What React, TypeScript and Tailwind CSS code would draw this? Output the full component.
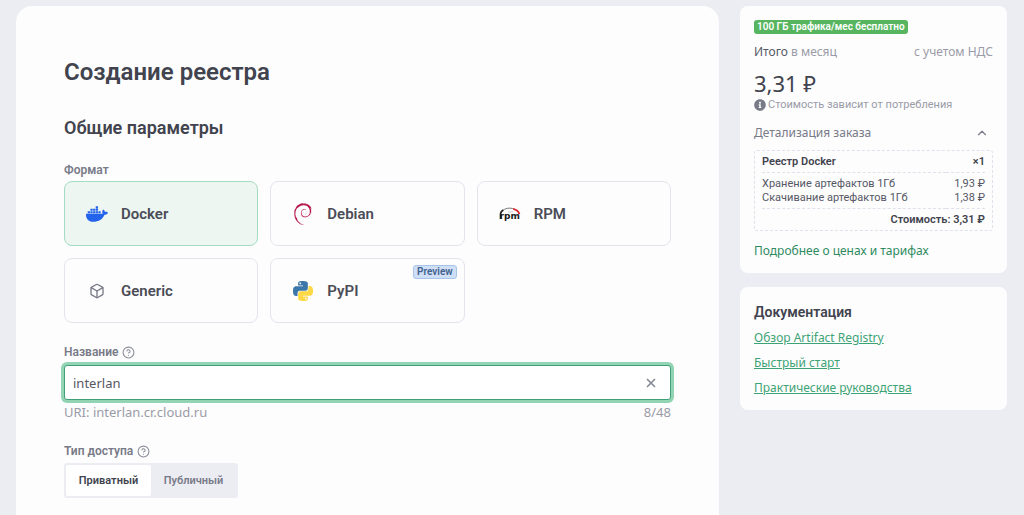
import { useState } from 'react'
import type { ReactNode } from 'react'
import { Box, ChevronUp, CircleHelp, X } from 'lucide-react'
import { FaDocker, FaInfoCircle } from 'react-icons/fa'
import { SiDebian } from 'react-icons/si'

function PythonIcon() {
  return (
    <svg viewBox="0 0 24 24" className="h-5 w-5" aria-hidden="true">
      <path
        fill="#3b77a8"
        d="M14.25.18l.9.2.73.26.59.3.45.32.34.34.25.34.16.33.1.3.04.26.02.2-.01.13V8.5l-.05.63-.13.55-.21.46-.26.38-.3.31-.33.25-.35.19-.35.14-.33.1-.3.07-.26.04-.21.02H8.77l-.69.05-.59.14-.5.22-.41.27-.33.32-.27.35-.2.36-.15.37-.1.35-.07.32-.04.27-.02.21v3.06H3.17l-.21-.03-.28-.07-.32-.12-.35-.18-.36-.26-.36-.36-.35-.46-.32-.59-.28-.73-.21-.88-.14-1.05-.05-1.23.06-1.22.16-1.04.24-.87.32-.71.36-.57.4-.44.42-.33.42-.24.4-.16.36-.1.32-.05.24-.01h.16l.06.01h8.16v-.83H6.18l-.01-2.75-.02-.37.05-.34.11-.31.17-.28.25-.26.31-.23.38-.2.44-.18.51-.15.58-.12.64-.1.71-.06.77-.04.84-.02 1.27.05zm-6.3 1.98l-.23.33-.08.41.08.41.23.34.33.22.41.09.41-.09.33-.22.23-.34.08-.41-.08-.41-.23-.33-.33-.22-.41-.09-.41.09z"
      />
      <path
        fill="#ffd845"
        d="M21.04 6.11l.28.06.32.12.35.18.36.27.36.35.35.47.32.59.28.73.21.88.14 1.04.05 1.23-.06 1.23-.16 1.04-.24.86-.32.71-.36.57-.4.45-.42.33-.42.24-.4.16-.36.09-.32.05-.24.02-.16-.01h-8.22v.82h5.84l.01 2.76.02.36-.05.34-.11.31-.17.29-.25.25-.31.24-.38.2-.44.17-.51.15-.58.13-.64.09-.71.07-.77.04-.84.01-1.27-.04-1.07-.14-.9-.2-.73-.25-.59-.3-.45-.33-.34-.34-.25-.34-.16-.33-.1-.3-.04-.25-.02-.2.01-.13v-5.34l.05-.64.13-.54.21-.46.26-.38.3-.32.33-.24.35-.2.35-.14.33-.1.3-.06.26-.04.21-.02.13-.01h5.84l.69-.05.59-.14.5-.21.41-.28.33-.32.27-.35.2-.36.15-.36.1-.35.07-.32.04-.28.02-.21V6.07h2.09l.14.01zm-6.47 14.25l-.23.33-.08.41.08.41.23.33.33.23.41.08.41-.08.33-.23.23-.33.08-.41-.08-.41-.23-.33-.33-.23-.41-.08-.41.08z"
      />
    </svg>
  )
}

function RpmIcon() {
  return (
    <svg viewBox="0 0 22 14" className="h-[14px] w-[22px]" aria-hidden="true">
      <path d="M3 4.2C6 1 11 .4 15 2" fill="none" stroke="#777" strokeWidth="1" />
      <path d="M1.6 12V6.500C1.800 5 2.800 3.800 4.300 3" fill="none" stroke="#222" strokeWidth="1.8" />
      <path d="M14.2 1.900C17.600 2.700 19.800 4.500 20.400 7.200" fill="none" stroke="#d9252c" strokeWidth="1.8" />
      <path d="M9 5.200L14 4.600" stroke="#aaa" strokeWidth="0.6" />
      <text x="0.6" y="12" fontSize="9" fontWeight="700" fontFamily="DejaVu Sans" fill="#1a1a1a">
        rpm
      </text>
    </svg>
  )
}

interface Format {
  id: string
  icon: ReactNode
  preview?: boolean
}

const formats: Format[] = [
  { id: 'Docker', icon: <FaDocker className="h-[22px] w-[22px] text-[#2463eb]" /> },
  { id: 'Debian', icon: <SiDebian className="h-[22px] w-[22px] text-[#b8194c]" /> },
  { id: 'RPM', icon: <RpmIcon /> },
  { id: 'Generic', icon: <Box className="h-4 w-4 text-[#787a88]" strokeWidth={2} /> },
  { id: 'PyPI', icon: <PythonIcon />, preview: true },
]

const artifacts = [
  { name: 'Хранение артефактов 1Гб', price: '1,93 ₽' },
  { name: 'Скачивание артефактов 1Гб', price: '1,38 ₽' },
]

const docs = ['Обзор Artifact Registry', 'Быстрый старт', 'Практические руководства']

const accessTypes = ['Приватный', 'Публичный']

function Hint({ label }: { label: string }) {
  return (
    <button type="button" aria-label={label} className="text-[#8b8d9a]">
      <CircleHelp className="h-[13px] w-[13px]" />
    </button>
  )
}

function RegistryForm() {
  const [format, setFormat] = useState('Docker')
  const [name, setName] = useState('interlan')
  const [access, setAccess] = useState('Приватный')

  return (
    <main className="min-w-0 flex-1 rounded-t-2xl bg-[#fdfdfd] px-12 pt-[50px]">
      <h1 className="font-[Roboto,sans-serif] text-2xl leading-8 font-semibold text-[#41434e]">Создание реестра</h1>
      <h2 className="mt-7 font-[Roboto,sans-serif] text-lg leading-6 font-semibold text-[#41434e]">
        Общие параметры
      </h2>

      <fieldset className="mt-[21px]">
        <legend className="font-[Roboto,sans-serif] text-[12px] leading-[18px] font-semibold text-[#787a88]">
          Формат
        </legend>
        <div className="mt-[2px] grid grid-cols-3 gap-3">
          {formats.map((f) => (
            <label
              key={f.id}
              className={`relative flex h-[65px] cursor-pointer items-center rounded-lg border pl-5 ${
                format === f.id ? 'border-[#a3dcc3] bg-[#edf6f1]' : 'border-[#e3e4ed]'
              }`}
            >
              <input
                type="radio"
                name="format"
                value={f.id}
                checked={format === f.id}
                onChange={() => setFormat(f.id)}
                className="sr-only"
              />
              <span className="flex w-6 justify-center">{f.icon}</span>
              <span className="ml-3 font-[Roboto,sans-serif] text-[15px] leading-5 font-semibold text-[#4b4c57]">
                {f.id}
              </span>
              {f.preview && (
                <span className="absolute top-[6px] right-[7px] rounded-[3px] border border-[#a9c4ea] bg-[#cfdff5] px-[3px] font-[Roboto,sans-serif] text-[10px] leading-3 font-semibold text-[#42618f]">
                  Preview
                </span>
              )}
            </label>
          ))}
        </div>
      </fieldset>

      <div className="mt-5 flex items-center gap-1">
        <label
          htmlFor="name"
          className="font-[Roboto,sans-serif] text-[12px] leading-[18px] font-semibold text-[#787a88]"
        >
          Название
        </label>
        <Hint label="Подсказка: название" />
      </div>
      <div className="mt-1 flex h-[35px] items-center rounded-[3px] border border-[#3f9f78] bg-white pr-3 pl-2 ring-3 ring-[#93d4b4]">
        <input
          id="name"
          value={name}
          maxLength={48}
          onChange={(e) => setName(e.target.value)}
          className="min-w-0 flex-1 text-[13px] leading-5 text-[#555764] outline-none"
        />
        <button type="button" aria-label="Очистить" onClick={() => setName('')} className="text-[#8b8d9a]">
          <X className="h-[14px] w-[14px]" strokeWidth={3} />
        </button>
      </div>
      <div className="mt-[3px] flex justify-between text-[13px] leading-[18px] text-[#9a9ba8]">
        <span>URI: {name}.cr.cloud.ru</span>
        <span>{name.length}/48</span>
      </div>

      <fieldset className="mt-[21px]">
        <legend className="flex items-center gap-1 font-[Roboto,sans-serif] text-[12px] leading-[18px] font-semibold text-[#787a88]">
          Тип доступа
          <Hint label="Подсказка: тип доступа" />
        </legend>
        <div className="mt-[3px] inline-flex rounded-[3px] bg-[#ecedf3] p-[2px]">
          {accessTypes.map((type) => (
            <button
              key={type}
              type="button"
              aria-pressed={access === type}
              onClick={() => setAccess(type)}
              className={`h-[31px] w-[85px] rounded-[2px] font-[Roboto,sans-serif] text-[11px] leading-4 font-semibold ${
                access === type ? 'bg-white text-[#41434e]' : 'text-[#787a88]'
              }`}
            >
              {type}
            </button>
          ))}
        </div>
      </fieldset>
    </main>
  )
}

function PriceCard() {
  return (
    <section className="rounded-lg bg-[#fdfdfd] px-[14px] pt-[14px] pb-3">
      <div className="flex">
        <span className="rounded-[3px] bg-[#57b560] px-[3px] font-[Roboto,sans-serif] text-[10px] leading-[14px] font-semibold text-white">
          100 ГБ трафика/мес бесплатно
        </span>
      </div>
      <div className="mt-2 flex justify-between text-[12px] leading-5 text-[#9a9ba8]">
        <span>
          <span className="text-[#555764]">Итого</span> в месяц
        </span>
        <span>с учетом НДС</span>
      </div>
      <div className="mt-[7px] text-[22px] leading-7 text-[#41434e]">3,31 ₽</div>
      <div className="flex items-center gap-[2px] font-[Roboto,sans-serif] text-[11px] leading-4 text-[#9a9ba8]">
        <FaInfoCircle className="h-3 w-3 text-[#787a88]" />
        Стоимость зависит от потребления
      </div>
      <button
        type="button"
        className="mt-[10px] flex w-full items-center justify-between pr-1 text-[12px] leading-5 text-[#787a88]"
      >
        Детализация заказа
        <ChevronUp className="h-[14px] w-[14px]" />
      </button>
      <div className="mt-[7px] rounded-[3px] border border-dashed border-[#e0e1ea] px-[7px]">
        <table className="w-full border-collapse font-[Roboto,sans-serif] text-[11px] leading-[14px] text-[#555764]">
          <thead>
            <tr className="border-b border-dashed border-[#e0e1ea] text-left text-[#41434e]">
              <th className="pt-1 pb-[3px] font-semibold">Реестр Docker</th>
              <th className="pt-1 pb-[3px] text-right font-semibold">×1</th>
            </tr>
          </thead>
          <tbody className="border-b border-dashed border-[#e0e1ea]">
            {artifacts.map((a) => (
              <tr key={a.name} className="first:[&>td]:pt-1 last:[&>td]:pb-[3px]">
                <td>{a.name}</td>
                <td className="text-right">{a.price}</td>
              </tr>
            ))}
          </tbody>
          <tfoot>
            <tr className="text-[#41434e]">
              <td colSpan={2} className="pt-1 pb-[3px] text-right font-semibold">
                Стоимость: 3,31 ₽
              </td>
            </tr>
          </tfoot>
        </table>
      </div>
      <a href="#prices" className="mt-[10px] block text-[12px] leading-5 text-[#2f8a61]">
        Подробнее о ценах и тарифах
      </a>
    </section>
  )
}

function DocsCard() {
  return (
    <section className="rounded-lg bg-[#fdfdfd] px-[14px] pt-[15px] pb-3">
      <h3 className="font-[Roboto,sans-serif] text-[14px] leading-5 font-semibold text-[#41434e]">Документация</h3>
      <ul className="mt-[6px] space-y-[5px]">
        {docs.map((doc) => (
          <li key={doc} className="text-[12px] leading-5">
            <a href="#docs" className="text-[#3da376] underline">
              {doc}
            </a>
          </li>
        ))}
      </ul>
    </section>
  )
}

export default function App() {
  return (
    <div className="flex min-h-screen gap-[21px] bg-[#ecedf3] pt-[6px] pr-[17px] pl-4 font-['Noto_Sans',sans-serif]">
      <RegistryForm />
      <aside className="flex w-[267px] shrink-0 flex-col gap-[14px]">
        <PriceCard />
        <DocsCard />
      </aside>
    </div>
  )
}
